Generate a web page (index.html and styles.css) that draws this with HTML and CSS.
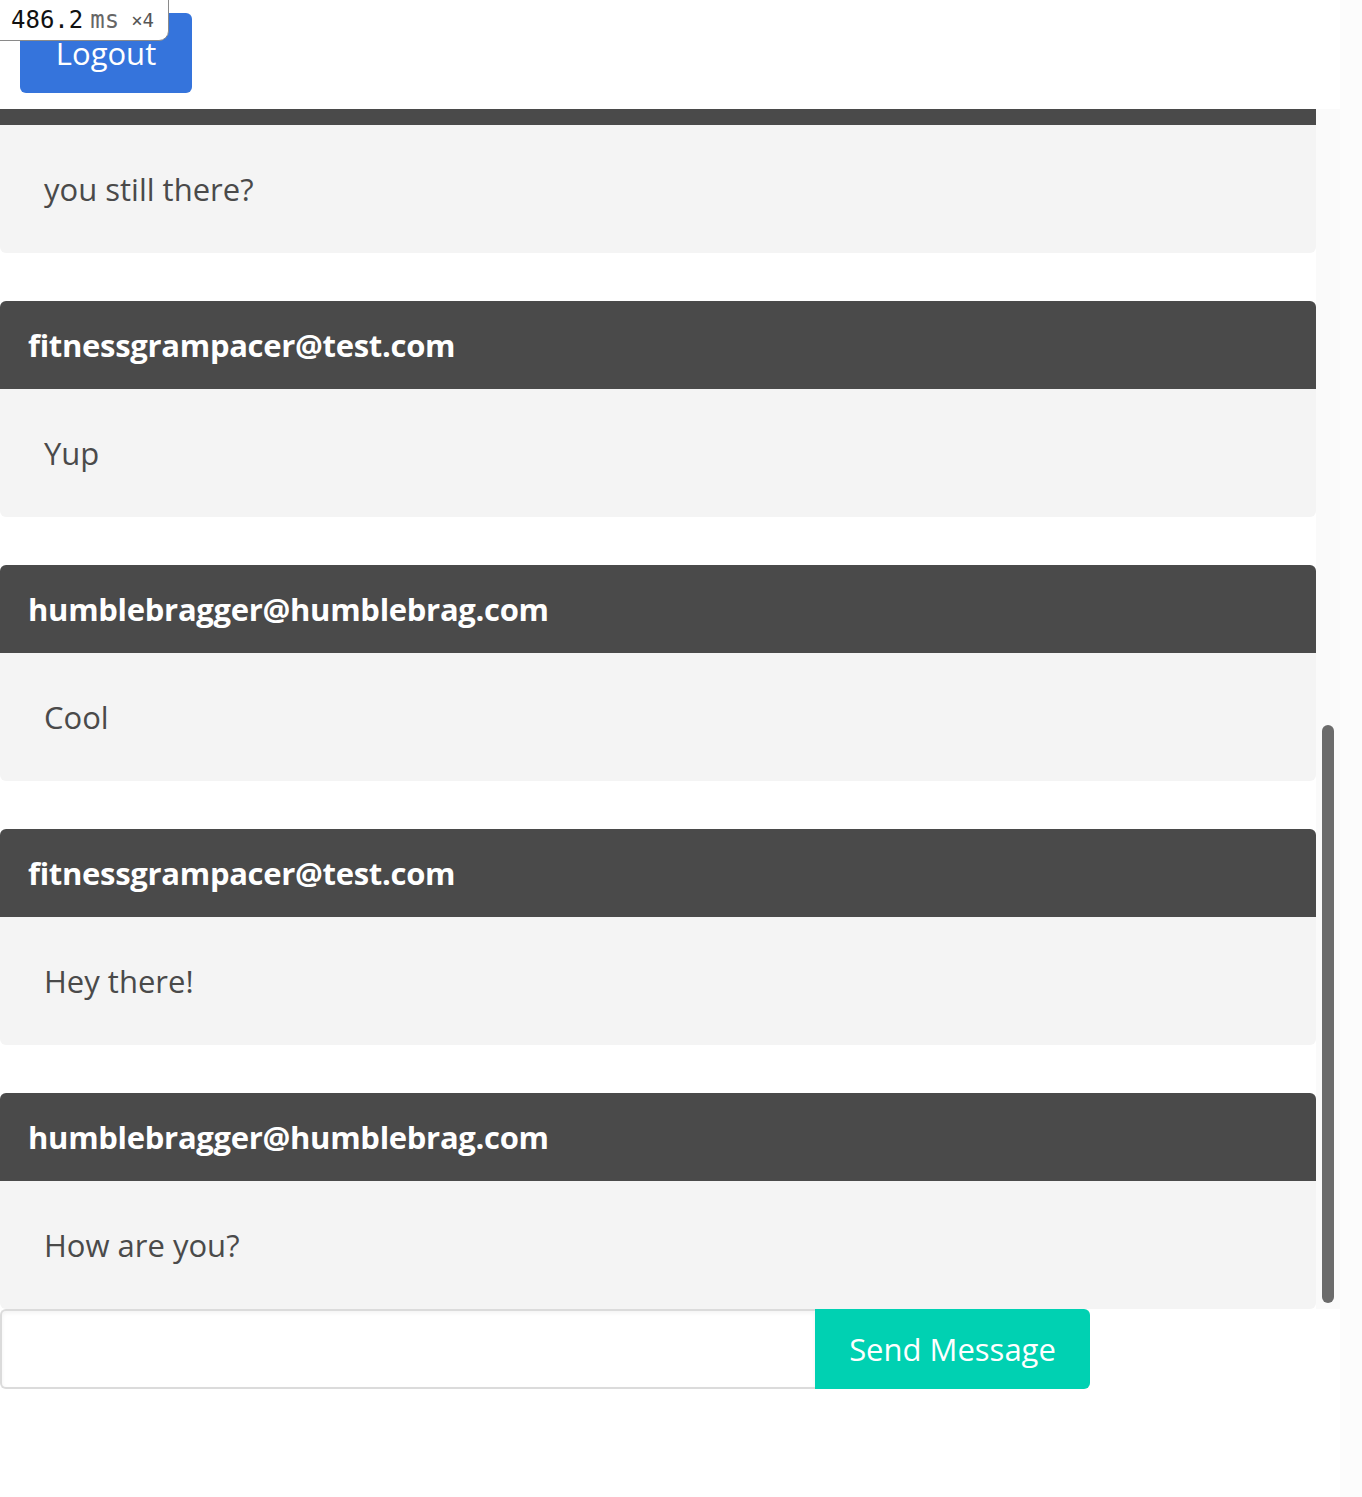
FILE: index.html
```html
<!DOCTYPE html>
<html lang="en">
<head>
<meta charset="utf-8">
<title>Chat</title>
<link rel="stylesheet" href="styles.css">
</head>
<body>
<div class="page">
  <main class="app">
    <div class="timer"><span class="ms-val">486.2</span><span class="ms-unit">ms</span><span class="ms-count">×4</span></div>
    <nav class="topbar">
      <button class="btn btn-logout">Logout</button>
    </nav>
    <div class="chat">
      <section class="messages">
        <div class="messages-inner">
          <article class="message">
            <div class="message-header">fitnessgrampacer@test.com</div>
            <div class="message-body">Hello, anyone here?</div>
          </article>
          <article class="message">
            <div class="message-header">humblebragger@humblebrag.com</div>
            <div class="message-body">Hi!</div>
          </article>
          <article class="message">
            <div class="message-header">fitnessgrampacer@test.com</div>
            <div class="message-body">What's up?</div>
          </article>
          <article class="message">
            <div class="message-header">humblebragger@humblebrag.com</div>
            <div class="message-body">Not much</div>
          </article>
          <article class="message">
            <div class="message-header">humblebragger@humblebrag.com</div>
            <div class="message-body">you still there?</div>
          </article>
          <article class="message">
            <div class="message-header">fitnessgrampacer@test.com</div>
            <div class="message-body">Yup</div>
          </article>
          <article class="message">
            <div class="message-header">humblebragger@humblebrag.com</div>
            <div class="message-body">Cool</div>
          </article>
          <article class="message">
            <div class="message-header">fitnessgrampacer@test.com</div>
            <div class="message-body">Hey there!</div>
          </article>
          <article class="message">
            <div class="message-header">humblebragger@humblebrag.com</div>
            <div class="message-body">How are you?</div>
          </article>
        </div>
      </section>
      <div class="scroll-track"><div class="scroll-thumb"></div></div>
    </div>
    <form class="composer">
      <input class="composer-input" type="text">
      <button class="btn btn-send" type="button">Send Message</button>
    </form>
  </main>
  <aside class="gutter"></aside>
</div>
</body>
</html>
```
FILE: styles.css
```css
* { box-sizing: border-box; }
html, body { margin: 0; padding: 0; background: #fff; }
body {
  font-family: "Open Sans", "Noto Sans", sans-serif;
  font-size: 31px;
  color: #4a4a4a;
}
.page { display: flex; height: 1497px; }
.app { width: 1340px; position: relative; }
.gutter { flex: 1; background: #fcfcfc; }

.timer {
  position: absolute;
  top: -1px; left: -1px;
  height: 42px;
  padding: 0 14px 0 11px;
  background: #fff;
  border: 1px solid #8a8a8a;
  border-bottom-right-radius: 10px;
  display: flex;
  align-items: center;
  gap: 7px;
  font-family: "DejaVu Sans Mono", monospace;
  z-index: 5;
}
.ms-val { font-size: 24px; color: #111; }
.ms-unit { font-size: 24px; color: #666; }
.ms-count { font-size: 19px; color: #555; margin-left: 5px; }

.topbar { height: 109px; padding: 13px 0 0 20px; }
.btn {
  font-family: inherit;
  font-size: 31px;
  border: none;
  color: #fff;
  height: 80px;
  cursor: pointer;
}
.btn-logout {
  background: #3574dc;
  border-radius: 6px;
  width: 172px;
  padding: 0;
}

.chat { display: flex; height: 1200px; }
.messages {
  width: 1316px;
  height: 1200px;
  overflow: hidden;
  display: flex;
  flex-direction: column-reverse;
}
.scroll-track {
  width: 24px;
  background: #fafafa;
  padding: 6px;
  display: flex;
  flex-direction: column;
  justify-content: flex-end;
}
.scroll-thumb {
  height: 578px;
  background: #6b6b6b;
  border-radius: 6px;
}
.message { margin-bottom: 48px; }
.message:last-child { margin-bottom: 0; }
.message-header {
  background: #4a4a4a;
  color: #fff;
  font-weight: 700;
  letter-spacing: -0.3px;
  line-height: 40px;
  padding: 24px 28px;
  border-radius: 6px 6px 0 0;
}
.message-body {
  background: #f4f4f4;
  line-height: 48px;
  padding: 40px 44px;
  border-radius: 0 0 6px 6px;
}

.composer { display: flex; }
.composer-input {
  width: 815px;
  height: 80px;
  border: 2px solid #dbdbdb;
  border-right: none;
  border-radius: 6px 0 0 6px;
  box-shadow: inset 0 2px 4px rgba(10,10,10,0.05);
  font-family: inherit;
  font-size: 31px;
  padding: 0 20px;
  outline: none;
}
.btn-send {
  background: #00d1b2;
  border-radius: 0 6px 6px 0;
  width: 275px;
  padding: 0;
}
```
